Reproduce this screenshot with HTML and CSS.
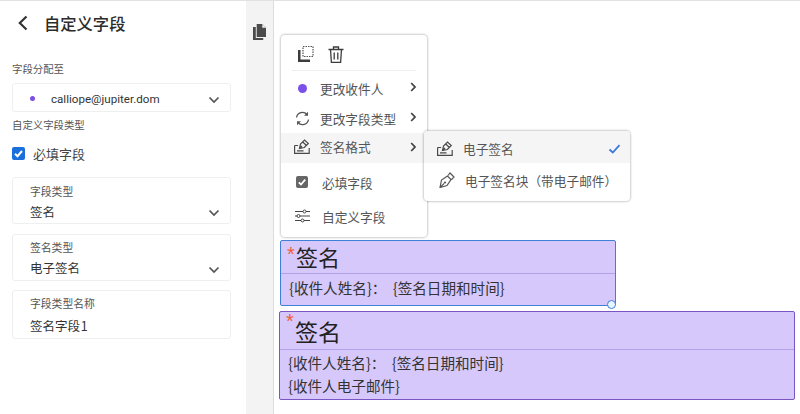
FILE: index.html
```html
<!DOCTYPE html>
<html lang="zh-CN">
<head>
<meta charset="utf-8">
<title>自定义字段</title>
<link rel="stylesheet" href="styles.css">
</head>
<body>
<div class="page">
  <aside class="sidebar">
    <header class="head">
      <svg class="back" width="12" height="16" viewBox="0 0 12 16"><path d="M9.5 1.500 2.800 8l6.700 6.500" fill="none" stroke="#333" stroke-width="2.200"/></svg>
      <h1 class="title">自定义字段</h1>
    </header>
    <div class="label label-first">字段分配至</div>
    <div class="box assign">
      <span class="dot"></span>
      <span class="email">calliope@jupiter.dom</span>
      <svg class="chev" width="12" height="8" viewBox="0 0 12 8"><path d="M1.500 1.500 6 6l4.500-4.500" fill="none" stroke="#555" stroke-width="1.700"/></svg>
    </div>
    <div class="label label-second">自定义字段类型</div>
    <label class="req">
      <span class="check"><svg width="13" height="13" viewBox="0 0 13 13"><path d="M3 6.800 5.500 9.200 10 4" fill="none" stroke="#fff" stroke-width="2"/></svg></span>
      必填字段
    </label>
    <div class="box card card-a">
      <div class="card-label">字段类型</div>
      <div class="card-value">签名</div>
      <svg class="chev card-chev" width="12" height="8" viewBox="0 0 12 8"><path d="M1.500 1.500 6 6l4.500-4.500" fill="none" stroke="#555" stroke-width="1.700"/></svg>
    </div>
    <div class="box card card-b">
      <div class="card-label">签名类型</div>
      <div class="card-value">电子签名</div>
      <svg class="chev card-chev" width="12" height="8" viewBox="0 0 12 8"><path d="M1.500 1.500 6 6l4.500-4.500" fill="none" stroke="#555" stroke-width="1.700"/></svg>
    </div>
    <div class="box card card-c">
      <div class="card-label">字段类型名称</div>
      <div class="card-value card-input">签名字段 1</div>
    </div>
  </aside>

  <nav class="rail">
    <svg width="13" height="16" viewBox="0 0 14 17"><path d="M4 0h6l4 4v10H4z" fill="#4b4b4b"/><path d="M10 0v4h4z" fill="#f3f3f3"/><path d="M0 3h3v12h8v2H0z" fill="#4b4b4b"/></svg>
  </nav>

  <main class="canvas">
    <div class="field field-one">
      <div class="field-title"><span class="star">*</span>签名</div>
      <div class="field-body"><div class="field-line">{收件人姓名}：&nbsp;{签名日期和时间}</div></div>
      <span class="handle"></span>
    </div>
    <div class="field field-two">
      <div class="field-title"><span class="star">*</span>签名</div>
      <div class="field-body">
        <div class="field-line">{收件人姓名}：&nbsp;{签名日期和时间}</div>
        <div class="field-line">{收件人电子邮件}</div>
      </div>
    </div>

    <div class="menu">
      <div class="tools">
        <svg width="16" height="16" viewBox="0 0 16 16"><path d="M0 4h2.500v9.500H12V16H0z" fill="#3c3c3c"/><rect x="5" y="0.500" width="10" height="10" fill="none" stroke="#555" stroke-width="1.200" stroke-dasharray="1.500 1"/></svg>
        <svg width="16" height="17" viewBox="0 0 16 17"><path d="M.5 3.500h15M5.500 3.500V1h5v2.500M2.500 3.500l.9 12.800h9.200l.9-12.800M6.200 6.500v7M9.800 6.500v7" fill="none" stroke="#3c3c3c" stroke-width="1.300"/></svg>
      </div>
      <div class="item item-a">
        <span class="item-icon"><span class="item-dot"></span></span>
        <span class="item-text">更改收件人</span>
        <svg class="arrow" width="7" height="10" viewBox="0 0 7 10"><path d="M1.200 1 5 5 1.200 9" fill="none" stroke="#444" stroke-width="1.800"/></svg>
      </div>
      <div class="item item-b">
        <span class="item-icon"><svg width="15" height="15" viewBox="0 0 15 15"><path d="M1.500 6.500A6 6 0 0 1 12 3.500M13.500 8.500A6 6 0 0 1 3 11.500" fill="none" stroke="#555" stroke-width="1.300"/><path d="M13 .8v4h-4zM2 14.200v-4h4z" fill="#555"/></svg></span>
        <span class="item-text">更改字段类型</span>
        <svg class="arrow" width="7" height="10" viewBox="0 0 7 10"><path d="M1.200 1 5 5 1.200 9" fill="none" stroke="#444" stroke-width="1.800"/></svg>
      </div>
      <div class="item item-c active">
        <span class="item-icon"><svg width="16" height="15" viewBox="0 0 16 15"><path d="M5.500 9.500 6.500 5l4-4 3.800 3.500-4 4zM8.700 3l3.500 3.300M5.500 9.500l2.500-2.500M.6 6.500v7.800h14.600V9M.6 6.500h3.500M9.500 11.800H3" fill="none" stroke="#4a4a4a" stroke-width="1.200"/></svg></span>
        <span class="item-text">签名格式</span>
        <svg class="arrow" width="7" height="10" viewBox="0 0 7 10"><path d="M1.200 1 5 5 1.200 9" fill="none" stroke="#444" stroke-width="1.800"/></svg>
      </div>
      <div class="item item-d">
        <span class="item-icon"><span class="grey-check"><svg width="12" height="12" viewBox="0 0 12 12"><path d="M2.800 6.300 5 8.500 9.200 3.600" fill="none" stroke="#fff" stroke-width="1.800"/></svg></span></span>
        <span class="item-text wide">必填字段</span>
      </div>
      <div class="item item-e">
        <span class="item-icon"><svg width="15" height="14" viewBox="0 0 15 14"><path d="M0 2.500h8M11 2.500h4M0 7h2M5 7h10M0 11.500h6M9 11.500h6" fill="none" stroke="#444" stroke-width="1.200"/><circle cx="9.500" cy="2.500" r="1.500" fill="none" stroke="#444"/><circle cx="3.500" cy="7" r="1.500" fill="none" stroke="#444"/><circle cx="7.500" cy="11.500" r="1.500" fill="none" stroke="#444"/></svg></span>
        <span class="item-text wide">自定义字段</span>
      </div>
    </div>

    <div class="submenu">
      <div class="sub-item first active">
        <span class="sub-icon"><svg width="16" height="15" viewBox="0 0 16 15"><path d="M5.500 9.500 6.500 5l4-4 3.800 3.500-4 4zM8.700 3l3.500 3.300M5.500 9.500l2.500-2.500M.6 6.500v7.800h14.600V9M.6 6.500h3.500M9.500 11.800H3" fill="none" stroke="#4a4a4a" stroke-width="1.200"/></svg></span>
        <span class="sub-text">电子签名</span>
        <svg class="tick" width="13" height="10" viewBox="0 0 13 10"><path d="M1.500 5.500 4.800 8.500 11.500 1.200" fill="none" stroke="#3b78d8" stroke-width="1.800"/></svg>
      </div>
      <div class="sub-item second">
        <span class="sub-icon"><svg width="16" height="16" viewBox="0 0 16 16"><path d="M1 15.500 2.500 8 8.500 4l3.500 3.500L8 13.500zM1 15.500l4.200-4.200M9 3.500l2-2.500 4 4-2.500 2.500" fill="none" stroke="#555" stroke-width="1.200"/><circle cx="6" cy="10.500" r="1.100" fill="#555"/></svg></span>
        <span class="sub-text">电子签名块（带电子邮件）</span>
      </div>
    </div>
  </main>
</div>
</body>
</html>
```
FILE: styles.css
```css
* { box-sizing: border-box; }
html, body { margin: 0; padding: 0; }
body {
  width: 800px;
  height: 414px;
  overflow: hidden;
  background: #fff;
  color: #2c2c2c;
  font-family: "Noto Sans CJK SC", "Noto Sans", sans-serif;
}
.page {
  display: flex;
  height: 414px;
  border-top: 1px solid #e1e1e1;
}
.sidebar {
  width: 246px;
  flex: none;
  padding: 0 15px 0 12px;
  background: #fff;
}
.head {
  display: flex;
  align-items: center;
  height: 44px;
  padding-left: 5px;
}
.back { margin-right: 15px; }
.title {
  margin: 0;
  font-size: 16.3px;
  font-weight: 500;
  line-height: 22px;
  color: #2c2c2c;
}
.label {
  font-size: 10.4px;
  line-height: 14px;
  color: #555;
}
.label-first { margin-top: 17px; }
.label-second { margin-top: 6px; }
.box {
  position: relative;
  border: 1px solid #efefef;
  border-radius: 3px;
  background: #fff;
}
.assign {
  display: flex;
  align-items: center;
  height: 29px;
  margin-top: 7px;
  padding: 2px 0 0 17px;
}
.dot {
  width: 5px;
  height: 5px;
  border-radius: 50%;
  background: #7b4fe0;
}
.email {
  margin-left: 16px;
  font-family: Roboto, sans-serif;
  font-size: 11.6px;
  color: #333;
}
.chev {
  position: absolute;
  right: 10px;
  top: 12px;
}
.req {
  display: flex;
  align-items: center;
  height: 20px;
  margin-top: 11px;
  font-size: 13px;
  color: #444;
}
.check {
  display: flex;
  width: 13px;
  height: 13px;
  margin-right: 8px;
  border-radius: 2px;
  background: #1a6fdc;
}
.card { padding: 0 17px; }
.card-a { height: 47px; margin-top: 14px; }
.card-b { height: 47px; margin-top: 10px; }
.card-c { height: 49px; margin-top: 9px; }
.card-label {
  margin-top: 5px;
  font-size: 10.8px;
  line-height: 15px;
  color: #555;
}
.card-a .card-label { margin-top: 6px; }
.card-value {
  margin-top: 3px;
  font-size: 12.5px;
  line-height: 19px;
  color: #333;
}
.card-input { margin-top: 5px; word-spacing: -2px; }
.card-chev { top: 31px; }
.rail {
  width: 28px;
  flex: none;
  padding: 20px 0 0 7px;
  background: #f3f3f3;
  border-right: 1px solid #dcdcdc;
}
.canvas {
  position: relative;
  flex: 1;
  background: #fff;
}
.menu, .submenu {
  position: absolute;
  background: #fff;
  border-radius: 4px;
  box-shadow: 0 0 2px 1px rgba(0, 0, 0, .2);
}
.menu { left: 7px; top: 34px; width: 146px; height: 202px; }
.tools {
  display: flex;
  gap: 14px;
  align-items: center;
  height: 36px;
  margin: 0 11px;
  padding: 3px 0 0 6px;
  border-bottom: 1px solid #eee;
}
.item {
  position: absolute;
  left: 0;
  right: 0;
  display: flex;
  align-items: center;
  height: 30px;
  font-size: 12.7px;
  color: #555;
}
.item-a { top: 38px; }
.item-b { top: 68px; }
.item-c { top: 98px; padding-bottom: 3px; }
.item-d { top: 132px; }
.item-e { top: 166px; }
.active { background: #f5f5f5; }
.item-icon {
  display: flex;
  justify-content: center;
  width: 39px;
  padding-left: 3px;
  flex: none;
}
.item-dot {
  width: 9px;
  height: 9px;
  margin-top: 1px;
  border-radius: 50%;
  background: #7b4fe8;
}
.grey-check {
  display: flex;
  width: 12px;
  height: 12px;
  border-radius: 2px;
  background: #666;
}
.item-text.wide { margin-left: 2px; }
.arrow { position: absolute; right: 10px; top: 9px; }
.submenu { left: 150px; top: 130px; width: 206px; height: 70px; }
.sub-item {
  position: relative;
  display: flex;
  align-items: center;
  height: 30px;
  padding-left: 13px;
  font-size: 12.7px;
  color: #555;
}
.sub-item.first { height: 32px; padding-top: 3px; border-radius: 4px 4px 0 0; }
.sub-item.second { margin-top: 2px; padding-left: 15px; }
.sub-item.second .sub-text { margin-left: 10px; }
.sub-icon { display: flex; width: 16px; flex: none; }
.sub-text { margin-left: 10px; }
.tick { position: absolute; right: 9px; top: 13px; }
.field {
  position: absolute;
  background: #d6c8fb;
  border-radius: 2px;
}
.field-one { left: 6px; top: 239px; width: 336px; height: 66px; border: 1px solid #3f7fd8; }
.field-two { left: 5px; top: 310px; width: 516px; height: 89px; border: 1px solid #7a56c4; }
.field-title {
  position: relative;
  padding: 0 0 2px 15px;
  font-size: 22px;
  line-height: 30px;
  color: #222;
  border-bottom: 1px solid #b4a0e8;
}
.field-two .field-title { height: 38px; padding-bottom: 0; font-size: 23px; line-height: 38px; }
.star {
  position: absolute;
  left: 6px;
  top: -2px;
  font-family: "Liberation Sans", sans-serif;
  font-size: 20px;
  line-height: 30px;
  color: #ee6036;
}
.field-two .star { top: -6px; }
.field-body { padding: 2px 8px 0; }
.field-two .field-body { padding-top: 1px; }
.field-line {
  font-size: 14.6px;
  line-height: 23px;
  word-spacing: 3px;
  color: #333;
}
.handle {
  position: absolute;
  right: -1px;
  bottom: -4px;
  width: 9px;
  height: 9px;
  border: 1px solid #3f7fd8;
  border-radius: 50%;
  background: #eaf6ff;
}
```
